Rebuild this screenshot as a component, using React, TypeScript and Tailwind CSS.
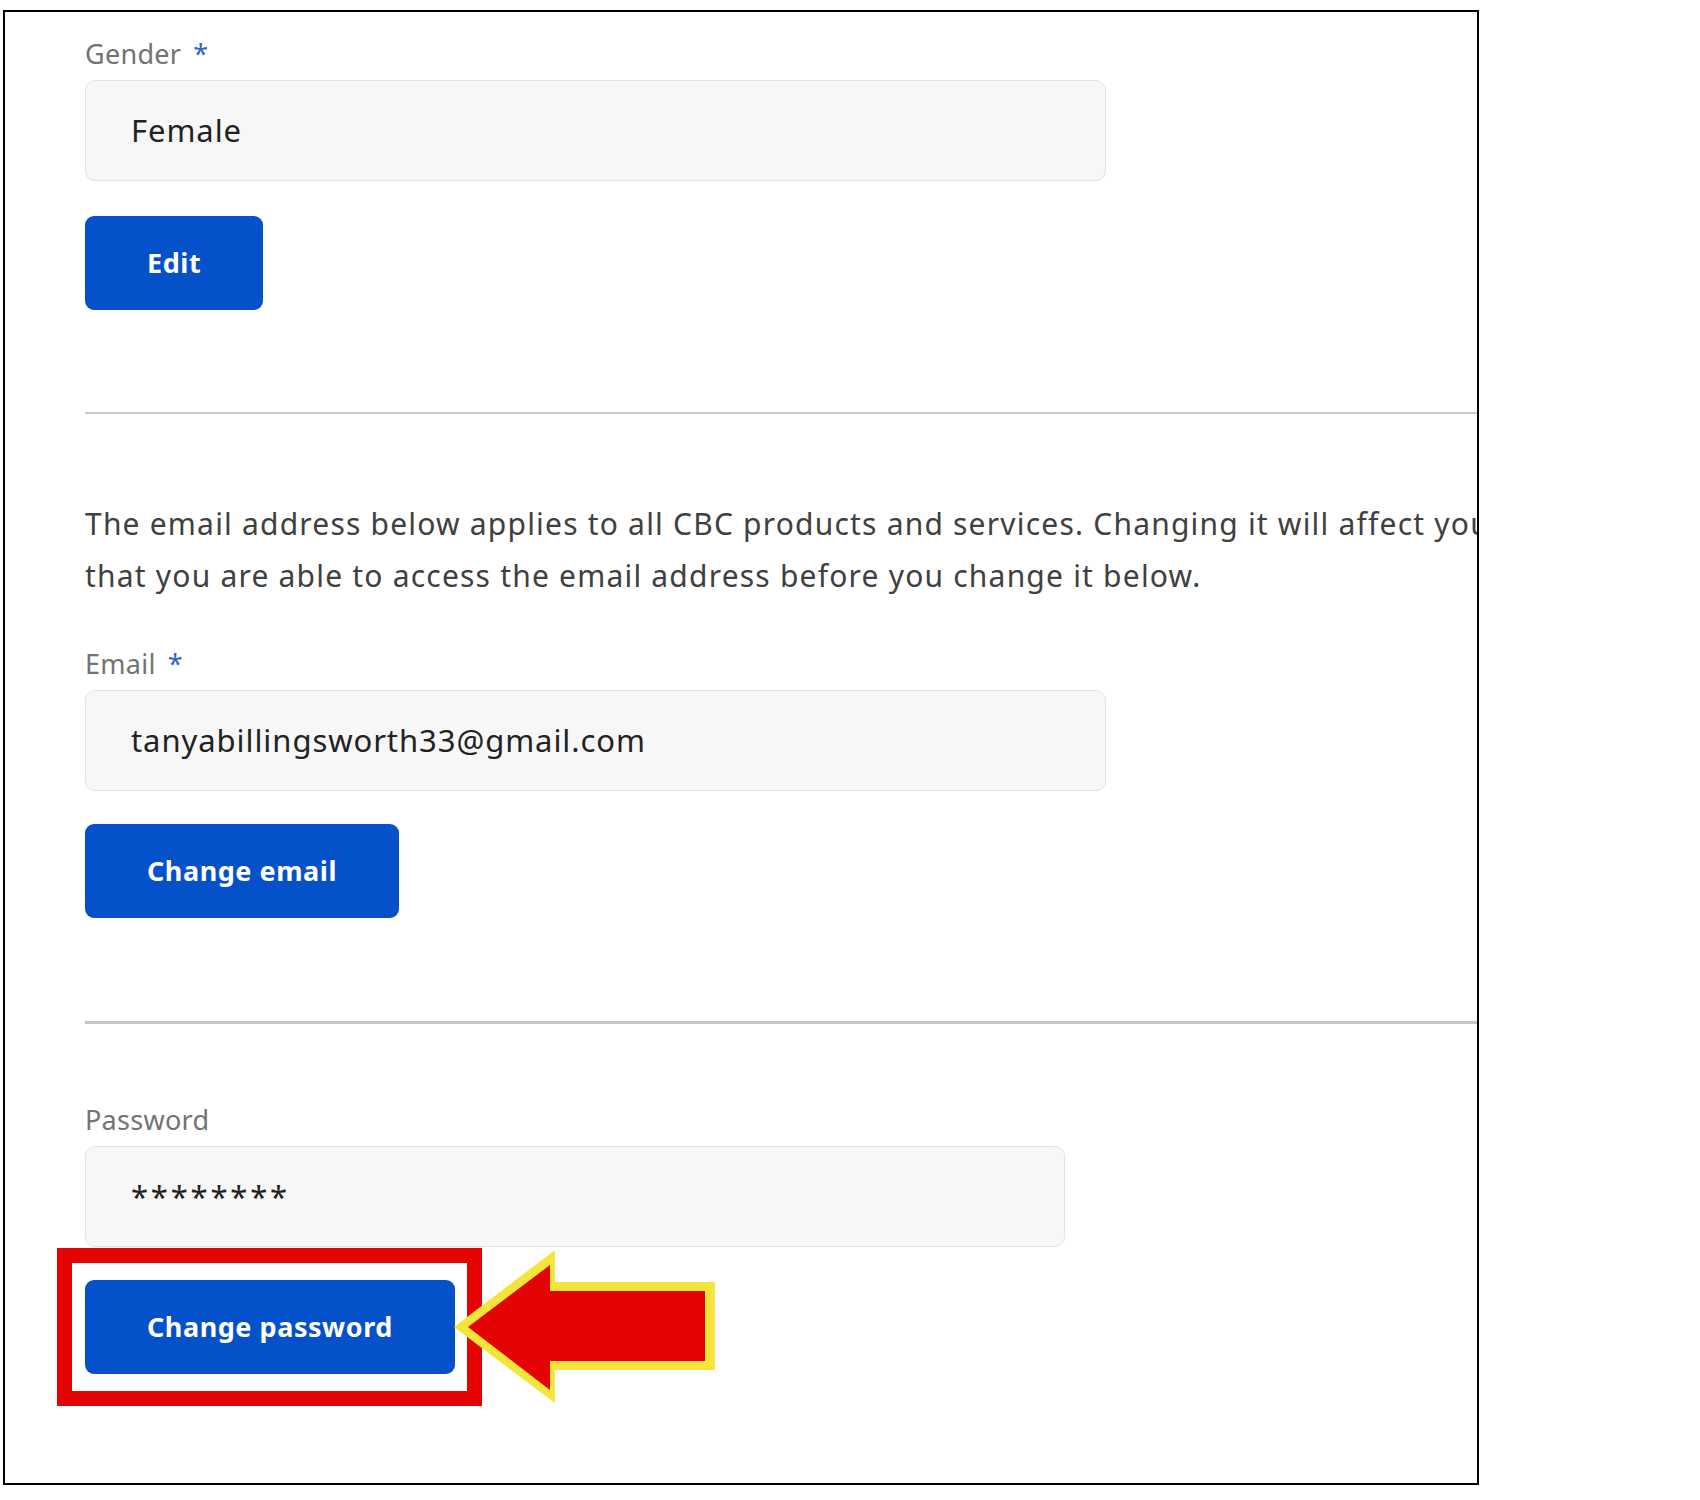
import React from 'react';

const Label: React.FC<{ text: string; required?: boolean }> = ({ text, required }) => (
  <div className="text-[27px] leading-[36px] tracking-[0.01em] text-[#737373]">
    {text}
    {required && <span className="ml-[12px] text-[#2f63d3]">*</span>}
  </div>
);

const Field: React.FC<{ children: React.ReactNode; width: string }> = ({ children, width }) => (
  <div
    className={`mt-[8px] flex h-[101px] ${width} items-center rounded-[10px] border border-[#e3e3e3] bg-[#f7f7f7] pl-[45px] text-[31px] tracking-[0.03em] text-[#222222]`}
  >
    {children}
  </div>
);

const BlueButton: React.FC<{ children: React.ReactNode }> = ({ children }) => (
  <button className="flex h-[94px] items-center rounded-[9px] bg-[#0551c9] px-[62px] text-[27px] font-bold tracking-[0.02em] text-white">
    {children}
  </button>
);

const App: React.FC = () => {
  return (
    <div className="h-[1500px] w-[1700px] bg-white pt-[10px] pl-[3px] font-['Noto_Sans',sans-serif]">
      <div className="h-[1475px] w-[1476px] overflow-hidden border-2 border-black">
        <div className="pt-[24px] pl-[80px]">
          {/* Gender */}
          <Label text="Gender" required />
          <Field width="w-[1021px]">Female</Field>
          <div className="mt-[35px]">
            <BlueButton>Edit</BlueButton>
          </div>

          <div className="mt-[102px] h-[2px] bg-[#c9c9c9]" />

          {/* Email */}
          <div className="mt-[84px] text-[30px] leading-[52px] tracking-[0.04em] text-[#404040]">
            <div className="whitespace-nowrap">
              The email address below applies to all CBC products and services. Changing it will affect your account
            </div>
            <div className="whitespace-nowrap">
              that you are able to access the email address before you change it below.
            </div>
          </div>

          <div className="mt-[44px]">
            <Label text="Email" required />
          </div>
          <Field width="w-[1021px]">tanyabillingsworth33@gmail.com</Field>
          <div className="mt-[33px]">
            <BlueButton>Change email</BlueButton>
          </div>

          <div className="mt-[103px] h-[3px] bg-[#c6c6c6]" />

          {/* Password */}
          <div className="mt-[78px]">
            <Label text="Password" />
          </div>
          <Field width="w-[980px]">
            <span className="tracking-[0.09em]">********</span>
          </Field>
          <div className="relative mt-[33px] w-fit">
            <BlueButton>Change password</BlueButton>
            <div className="absolute top-[-32px] left-[-28px] h-[158px] w-[425px] border-[15px] border-[#e50404]" />
            <svg
              className="absolute top-[-40px] left-[360px]"
              width="280"
              height="180"
              viewBox="0 0 280 180"
            >
              <polygon points="9,87 110,10 110,42 270,42 270,130 110,130 110,163" fill="#f5e43a" />
              <polygon points="23,87 105,25 105,51 260,51 260,121 105,121 105,150" fill="#e50404" />
            </svg>
          </div>
        </div>
      </div>
    </div>
  );
};

export default App;
